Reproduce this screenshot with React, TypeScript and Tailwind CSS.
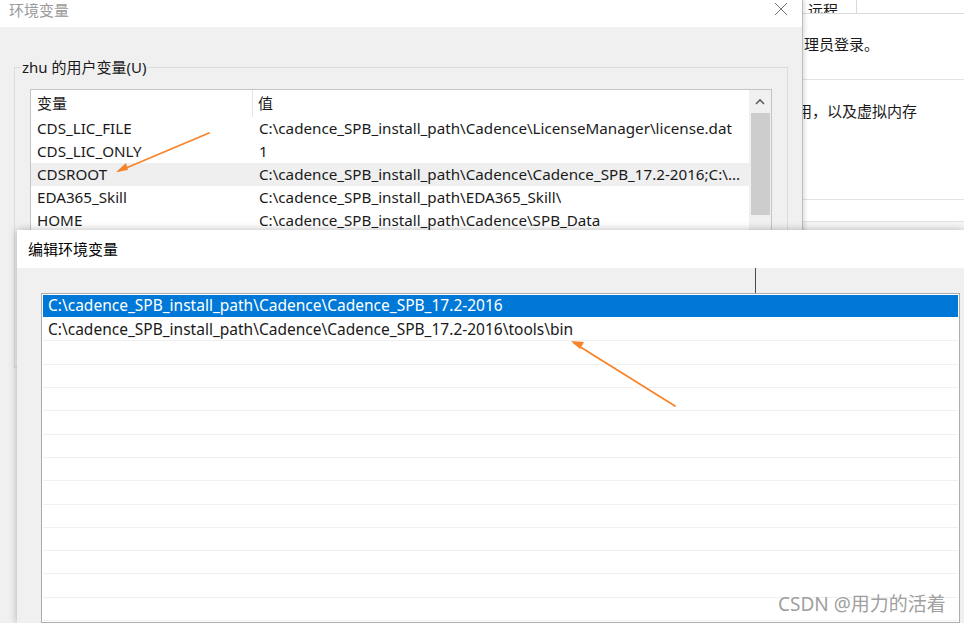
const userVars: [string, string][] = [
  ["CDS_LIC_FILE", "C:\\cadence_SPB_install_path\\Cadence\\LicenseManager\\license.dat"],
  ["CDS_LIC_ONLY", "1"],
  ["CDSROOT", "C:\\cadence_SPB_install_path\\Cadence\\Cadence_SPB_17.2-2016;C:\\..."],
  ["EDA365_Skill", "C:\\cadence_SPB_install_path\\EDA365_Skill\\"],
  ["HOME", "C:\\cadence_SPB_install_path\\Cadence\\SPB_Data"],
];

const paths = [
  "C:\\cadence_SPB_install_path\\Cadence\\Cadence_SPB_17.2-2016",
  "C:\\cadence_SPB_install_path\\Cadence\\Cadence_SPB_17.2-2016\\tools\\bin",
];

const font = "font-['Noto_Sans','Noto_Sans_CJK_SC',sans-serif]";

function EnvDialog() {
  return (
    <div className="w-[803px] h-full flex flex-col border-r border-[#bdbdbd] shadow-[2px_0_4px_rgba(0,0,0,0.12)] z-10">
      {/* title bar */}
      <div className="h-[27px] bg-white flex items-center justify-between pl-[9px] pr-[14px]">
        <span className="text-[15px] text-[#9a9a9a] leading-none -mt-[6px]">环境变量</span>
        <svg width="14" height="14" viewBox="0 0 14 14" className="-mt-[10px]">
          <path d="M1 1 L13 13 M13 1 L1 13" stroke="#777" strokeWidth="1" fill="none" />
        </svg>
      </div>

      <div className="flex-1 bg-[#f0f0f0] pt-[40px] px-[14px]">
        <div className="relative border border-[#dcdcdc] pt-[21px] px-[15px] pb-[14px]">
          <span className="absolute left-[6px] -top-[11px] bg-[#f0f0f0] px-[1px] text-[15px] text-[#1a1a1a] leading-[20px]">
            zhu 的用户变量(U)
          </span>

          <div className="bg-white border border-[#c4c4c4] flex">
            <div className="flex-1 flex flex-col">
              <div className="h-[27px] flex items-center text-[15px] text-[#1a1a1a]">
                <div className="w-[222px] h-full flex items-center pl-[6px] border-r border-[#e5e5e5]">变量</div>
                <div className="pl-[5px]">值</div>
              </div>
              {userVars.map(([name, value]) => (
                <div
                  key={name}
                  className={`h-[23px] flex items-center text-[15.2px] text-[#1a1a1a] whitespace-nowrap ${
                    name === "CDSROOT" ? "bg-[#efefef]" : ""
                  }`}
                >
                  <div className="w-[222px] pl-[6px] -mt-[1px]">{name}</div>
                  <div className="pl-[6px] overflow-hidden -mt-[1px]">{value}</div>
                </div>
              ))}
              <div className="h-[120px]" />
            </div>

            {/* scrollbar */}
            <div className="w-[22px] bg-[#f0f0f0] flex flex-col items-center">
              <div className="h-[23px] flex items-center justify-center">
                <svg width="10" height="7" viewBox="0 0 10 7">
                  <path d="M1 6 L5 2 L9 6" stroke="#606060" strokeWidth="1.6" fill="none" />
                </svg>
              </div>
              <div className="w-[19px] h-[102px] bg-[#cdcdcd]" />
            </div>
          </div>
        </div>
      </div>
    </div>
  );
}

function SideWindow() {
  return (
    <div className="flex-1 h-full bg-white flex flex-col overflow-hidden">
      <div className="h-[14px] flex border-b border-[#dadada]">
        <div className="w-[54px] h-full border-r border-[#dadada] pl-[5px] flex items-end overflow-hidden">
          <span className="text-[15px] leading-[20px] text-[#1a1a1a] -mb-[7px]">远程</span>
        </div>
      </div>
      <div className="h-[66px] border-b border-[#e3e3e3] flex items-center pl-[1px]">
        <span className="text-[15px] text-[#1a1a1a] -mt-[4px]">理员登录。</span>
      </div>
      <div className="pt-[19px] -ml-[6px] h-[120px] border-b border-[#e3e3e3]">
        <span className="text-[15px] text-[#1a1a1a] whitespace-nowrap">用，以及虚拟内存</span>
      </div>
      <div className="h-[22px] border-b border-[#e3e3e3]" />
      <div className="flex-1 bg-[#f7f7f7]" />
    </div>
  );
}

function EditDialog() {
  return (
    <div className="absolute left-[17px] top-[230px] right-0 bottom-0 flex flex-col shadow-[0_0_8px_rgba(0,0,0,0.28)] z-20">
      <div className="h-[38px] bg-white flex items-center pl-[11px]">
        <span className="text-[15px] text-black">编辑环境变量</span>
      </div>
      <div className="flex-1 bg-[#f0f0f0] pl-[24px] pr-[4px] flex flex-col">
        <div className="h-[25px] pl-[714px]">
          <div className="w-px h-full bg-[#4a4a4a]" />
        </div>
        <div className="flex-1 bg-white border border-[#adadad] p-[1px] overflow-hidden">
          {paths.map((p, i) => (
            <div
              key={p}
              className={`h-[23.3px] flex items-center pl-[5px] text-[15.5px] whitespace-nowrap border-b ${
                i === 0 ? "bg-[#0078d7] text-white border-white" : "text-[#1a1a1a] border-[#f0f0f0]"
              }`}
            >
              {p}
            </div>
          ))}
          {Array.from({ length: 12 }).map((_, i) => (
            <div key={i} className="h-[23.3px] border-b border-[#f0f0f0]" />
          ))}
        </div>
      </div>
    </div>
  );
}

export default function App() {
  return (
    <div className={`relative w-[964px] h-[623px] overflow-hidden bg-white ${font}`}>
      <div className="flex h-full">
        <EnvDialog />
        <SideWindow />
      </div>

      <EditDialog />

      {/* annotation arrows */}
      <svg className="absolute inset-0 z-30 pointer-events-none" width="964" height="623" viewBox="0 0 964 623">
        <g stroke="#f7842b" strokeWidth="1.8" fill="none" strokeLinecap="round">
          <path d="M209 133 L119 171" />
          <path d="M675 406 L574 343" />
        </g>
        <path d="M116 172 L126 163 L128 170 Z" fill="#f7842b" />
        <path d="M571 341 L584 342 L580 349 Z" fill="#f7842b" />
      </svg>

      <span className="absolute left-[778px] top-[590px] z-30 text-[19px] text-[#a0a0a0] whitespace-nowrap [text-shadow:0_0_2px_#fff]">
        CSDN @用力的活着
      </span>
    </div>
  );
}
